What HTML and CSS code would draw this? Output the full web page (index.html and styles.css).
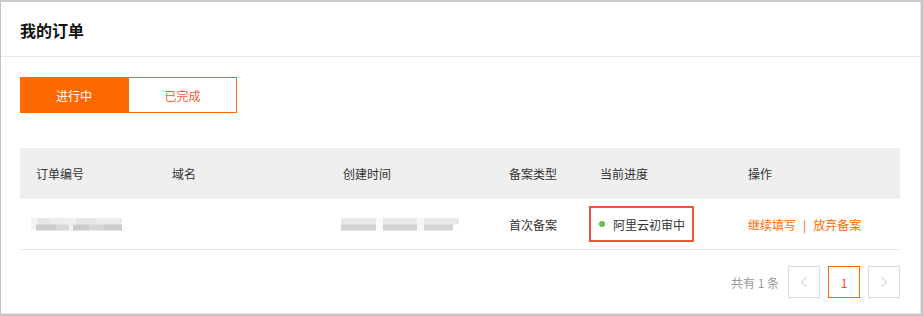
FILE: index.html
```html
<!DOCTYPE html>
<html lang="zh">
<head>
<meta charset="utf-8">
<link rel="stylesheet" href="styles.css">
</head>
<body>
<div class="frame">
  <div class="panel">
    <div class="header"><h1 class="title">我的订单</h1></div>
    <div class="tabs">
      <div class="tab tab-active">进行中</div>
      <div class="tab">已完成</div>
    </div>
    <div class="table">
      <div class="row row-head">
        <div>订单编号</div>
        <div>域名</div>
        <div>创建时间</div>
        <div>备案类型</div>
        <div>当前进度</div>
        <div>操作</div>
      </div>
      <div class="row row-body">
        <div><span class="blur blur-id"></span></div>
        <div></div>
        <div><span class="blur blur-time"></span></div>
        <div>首次备案</div>
        <div><span class="status"><span class="dot"></span>阿里云初审中</span></div>
        <div class="actions"><a class="link">继续填写</a><span class="sep">|</span><a class="link">放弃备案</a></div>
      </div>
    </div>
    <div class="pager">
      <span class="total">共有 1 条</span>
      <span class="pbtn"><svg width="8" height="12" viewBox="0 0 8 12"><path d="M6.5 1 L1.5 6 L6.5 11" fill="none" stroke="#c4c4c4" stroke-width="1"/></svg></span>
      <span class="pbtn pbtn-active">1</span>
      <span class="pbtn"><svg width="8" height="12" viewBox="0 0 8 12"><path d="M1.5 1 L6.5 6 L1.5 11" fill="none" stroke="#c4c4c4" stroke-width="1"/></svg></span>
    </div>
  </div>
</div>
</body>
</html>
```

FILE: styles.css
```css
* { box-sizing: border-box; }
html, body { margin: 0; padding: 0; background: #fff; }
body {
  font-family: "Noto Sans CJK SC", "Noto Sans", "Liberation Sans", sans-serif;
  color: #333;
}
.frame {
  width: 923px;
  height: 316px;
  border-top: 2px solid #cbcbcb;
  border-left: 1px solid #c4c4c4;
  border-right: 2px solid #c4c4c4;
  border-bottom: 2px solid #c4c4c4;
  overflow: hidden;
}
.panel {
  height: 100%;
  border-right: 1px solid #e6e6ec;
  border-bottom: 1px solid #e6e6ec;
  padding: 0 20px 0 19px;
}
.header {
  height: 55px;
  margin: 0 -20px 0 -19px;
  padding-left: 19px;
  border-bottom: 1px solid #e8e8e8;
  display: flex;
  align-items: center;
}
.title {
  margin: 0;
  font-size: 16px;
  font-weight: bold;
  color: #111;
  line-height: 1;
  padding-top: 1px;
}
.tabs {
  display: flex;
  margin-top: 20px;
}
.tab {
  width: 109px;
  height: 36px;
  border: 1px solid #ff6a00;
  display: flex;
  align-items: center;
  justify-content: center;
  font-size: 12px;
  color: #f35b3a;
}
.tab-active {
  width: 108px;
  background: #ff6a00;
  color: #fff;
}
.table {
  margin-top: 35px;
}
.row {
  display: grid;
  grid-template-columns: 136px 171px 166px 91px 148px 1fr;
  padding-left: 16px;
  align-items: center;
  font-size: 12px;
}
.row-head {
  height: 51px;
  background: #efefef;
  color: #333;
}
.row-body {
  height: 51px;
  border-bottom: 1px solid #e8e8e8;
}
.blur {
  display: block;
  height: 13px;
  filter: blur(0.6px);
  opacity: 0.75;
}
.blur-id {
  width: 91px;
  margin-left: -5px;
  background:
    linear-gradient(90deg, #eee 0 8%, #ddd 8% 20%, #e6e6e6 20% 34%, #eaeaea 34% 50%, #ddd 50% 70%, #e4e4e4 70% 100%) top / 100% 50% no-repeat,
    linear-gradient(90deg, #f0f0f0 0 6%, #bbb 6% 28%, #ccc 28% 42%, #eee 42% 46%, #bbb 46% 64%, #c8c8d0 64% 80%, #bcbcbc 80% 100%) bottom / 100% 50% no-repeat;
}
.blur-time {
  width: 118px;
  margin-left: -2px;
  background:
    linear-gradient(90deg, #e2e2e2 0 30%, #fafafa 30% 36%, #e2e2e2 36% 64%, #f5f5f5 64% 70%, #e2e2e2 70% 100%) top / 100% 50% no-repeat,
    linear-gradient(90deg, #c4c4c4 0 30%, #fafafa 30% 36%, #c4c4c4 36% 64%, #f5f5f5 64% 70%, #c8c8c8 70% 95%, #fff 95% 100%) bottom / 100% 50% no-repeat;
}
.status {
  display: inline-flex;
  align-items: center;
  height: 36px;
  margin-left: -11px;
  padding: 0 7px 0 8px;
  border: 2px solid #f0533a;
  font-size: 12px;
  color: #333;
}
.dot {
  width: 6px;
  height: 6px;
  border-radius: 50%;
  background: #6cbe4b;
  margin-right: 8px;
}
.actions {
  display: flex;
  align-items: center;
  color: #ff6a00;
}
.link { color: #ff6a00; }
.sep { margin: 0 7px; color: #ff6a00; }
.pager {
  display: flex;
  justify-content: flex-end;
  align-items: center;
  gap: 8px;
  margin-top: 16px;
}
.total {
  font-size: 12px;
  color: #999;
  margin-right: 1px;
}
.pbtn {
  width: 32px;
  height: 32px;
  border: 1px solid #dcdcdc;
  display: flex;
  align-items: center;
  justify-content: center;
  font-size: 12px;
  color: #f04c3a;
}
.pbtn-active {
  border-color: #ff6a00;
}
```
